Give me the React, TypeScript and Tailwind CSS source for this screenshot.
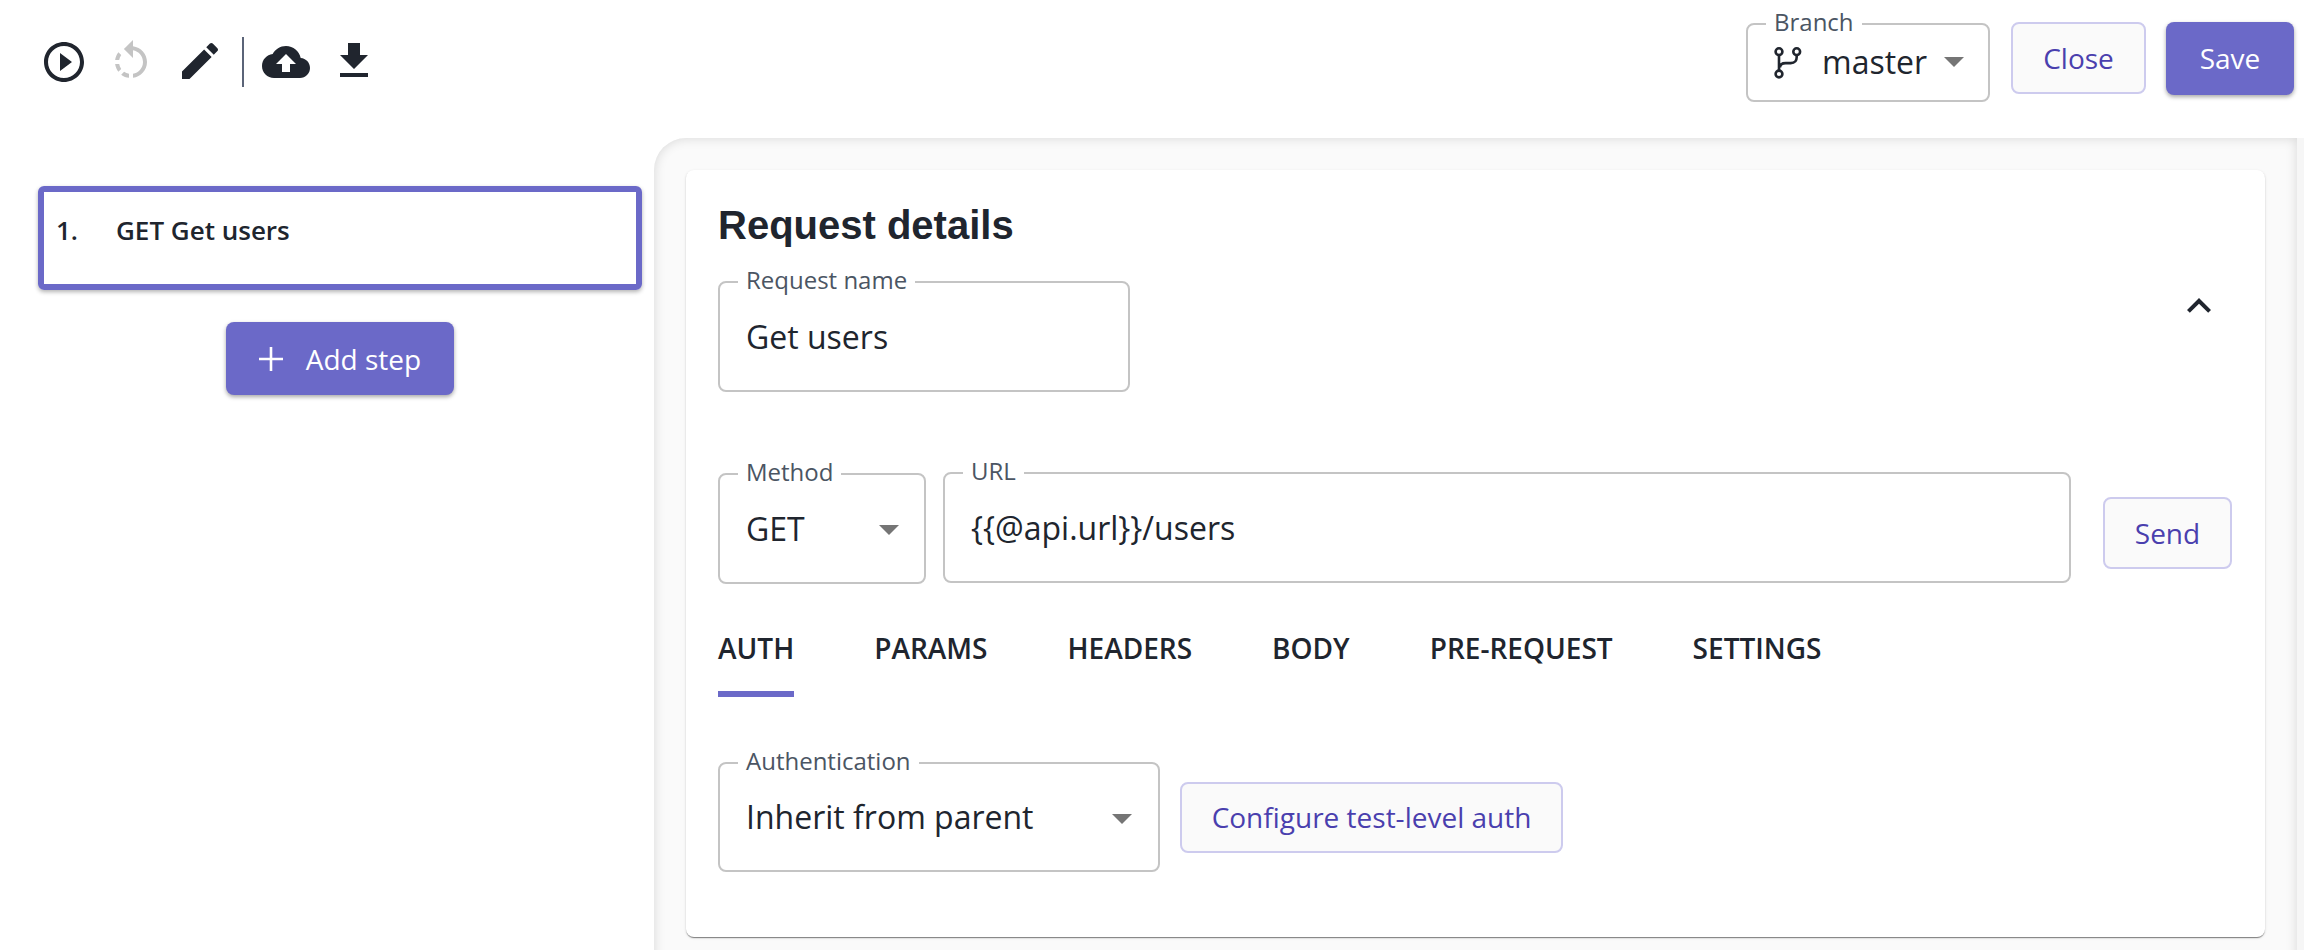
import type { ReactNode } from "react";

const font = "font-['Open_Sans',sans-serif]";

const Icon = ({ d, className }: { d: string; className: string }) => (
  <svg viewBox="0 0 24 24" fill="currentColor" className={className}>
    <path d={d} />
  </svg>
);

const arrow = "M7 10l5 5 5-5z";

const Outlined = ({
  label,
  className,
  children,
}: {
  label: string;
  className: string;
  children: ReactNode;
}) => (
  <div className={`relative flex items-center rounded-[8px] border-2 border-[#c4c4c4] pl-[26px] text-[32px] text-[#20252e] ${className}`}>
    <span className="absolute left-[18px] top-[-18px] bg-white px-[8px] text-[24px] leading-[30px] text-[#4b5563]">
      {label}
    </span>
    {children}
  </div>
);

const SelectArrow = ({ className }: { className: string }) => (
  <Icon d={arrow} className={`absolute size-[48px] text-[#757575] ${className}`} />
);

const LightButton = ({ children, className }: { children: ReactNode; className: string }) => (
  <button className={`rounded-[8px] border-2 border-[#cdcbee] bg-[#fafafa] text-[28px] text-[#4a3fae] ${className}`}>
    {children}
  </button>
);

const tabs = ["AUTH", "PARAMS", "HEADERS", "BODY", "PRE-REQUEST", "SETTINGS"];

export default function App() {
  return (
    <div className={`flex h-[950px] w-[2304px] flex-col overflow-hidden bg-white ${font}`}>
      <header className="flex h-[138px] shrink-0">
        <div className="flex flex-1 items-start pl-[40px] pt-[38px] text-[#20252e]">
          <Icon
            className="size-[48px]"
            d="M10 16.5l6-4.5-6-4.5v9zM12 2C6.48 2 2 6.48 2 12s4.48 10 10 10 10-4.48 10-10S17.52 2 12 2zm0 18c-4.41 0-8-3.59-8-8s3.59-8 8-8 8 3.59 8 8-3.59 8-8 8z"
          />
          <Icon
            className="ml-[19px] size-[48px] text-[#c4c4c4]"
            d="M7.11 8.53L5.7 7.11C4.8 8.27 4.24 9.61 4.07 11h2.02c.14-.87.49-1.72 1.02-2.47zM6.09 13H4.07c.17 1.39.72 2.73 1.62 3.89l1.41-1.42c-.52-.75-.87-1.59-1.01-2.47zm1.01 5.32c1.16.9 2.51 1.44 3.9 1.61V17.9c-.87-.15-1.71-.49-2.46-1.03L7.1 18.32zM13 4.07V1L8.45 5.55 13 10V6.09c2.84.48 5 2.94 5 5.91s-2.16 5.43-5 5.91v2.02c3.95-.49 7-3.85 7-7.93s-3.05-7.44-7-7.93z"
          />
          <Icon
            className="ml-[21px] mt-[-1px] size-[48px]"
            d="M3 17.25V21h3.75L17.81 9.94l-3.75-3.75L3 17.25zM20.71 7.04c.39-.39.39-1.02 0-1.41l-2.34-2.34c-.39-.39-1.02-.39-1.41 0l-1.83 1.83 3.75 3.75 1.83-1.83z"
          />
          <div className="ml-[18px] mt-[-1px] h-[50px] w-[2px] bg-[#5b6478]" />
          <Icon
            className="ml-[18px] size-[48px]"
            d="M19.35 10.04C18.67 6.59 15.64 4 12 4 9.11 4 6.6 5.64 5.35 8.04 2.34 8.36 0 10.91 0 14c0 3.31 2.69 6 6 6h13c2.76 0 5-2.24 5-5 0-2.64-2.05-4.78-4.65-4.96zM14 13v4h-4v-4H7l5-5 5 5h-3z"
          />
          <Icon
            className="ml-[20px] mt-[-1px] size-[48px]"
            d="M19 9h-4V3H9v6H5l7 7 7-7zM5 18v2h14v-2H5z"
          />
        </div>
        <div className="flex items-start pr-[10px] pt-[22px]">
          <Outlined label="Branch" className="mt-px h-[79px] w-[244px] !pl-[24px]">
            <svg viewBox="0 0 30 34" fill="none" stroke="currentColor" strokeWidth="2.6" className="h-[34px] w-[30px]">
              <circle cx="7" cy="5.7" r="3.4" />
              <circle cx="24.7" cy="5.7" r="3.4" />
              <circle cx="7" cy="28" r="3.4" />
              <path d="M7 9.1v15.5M24.7 9.1v2c0 4-2 6-6 6h-5c-3.5 0-5.7 1.5-5.7 4.5" />
            </svg>
            <span className="mb-[2px] ml-[20px]">master</span>
            <SelectArrow className="right-[10px] top-[12px]" />
          </Outlined>
          <LightButton className="ml-[21px] h-[72px] w-[135px]">Close</LightButton>
          <button className="ml-[20px] h-[73px] w-[128px] rounded-[8px] bg-[#6b69c8] pb-[2px] text-[28px] text-white shadow-[0_2px_4px_rgba(0,0,0,0.35)]">
            Save
          </button>
        </div>
      </header>
      <div className="flex min-h-0 flex-1">
        <aside className="flex w-[654px] shrink-0 flex-col items-center pl-[38px] pr-[12px] pt-[48px]">
          <div className="h-[104px] w-full rounded-[6px] border-[6px] border-[#6b69c8] pl-[12px] pt-[21px] text-[26px] font-semibold leading-[34px] text-[#20252e] shadow-[0_2px_4px_rgba(0,0,0,0.3)]">
            <span className="inline-block w-[60px]">1.</span>GET Get users
          </div>
          <button className="mt-[32px] flex h-[73px] w-[228px] items-center justify-center rounded-[8px] bg-[#6b69c8] text-[28px] text-white shadow-[0_2px_4px_rgba(0,0,0,0.35)]">
            <svg viewBox="0 0 24 24" stroke="currentColor" strokeWidth="2.6" className="mr-[23px] size-[24px]">
              <path d="M12 0v24M0 12h24" />
            </svg>
            Add step
          </button>
        </aside>
        <main className="mb-[-40px] flex-1 rounded-tl-[32px] bg-[#fafafa] pl-[32px] pr-[32px] pt-[32px] shadow-[inset_0_0_12px_rgba(0,0,0,0.14)]">
          <section className="relative h-[767px] rounded-[8px] bg-white px-[32px] pt-[32px] shadow-[0_2px_1px_-1px_rgba(0,0,0,0.3),0_1px_1px_0_rgba(0,0,0,0.2),0_1px_3px_0_rgba(0,0,0,0.12)]">
            <h2 className="font-['Liberation_Sans',sans-serif] text-[40px] font-bold leading-[46px] text-[#20252e]">
              Request details
            </h2>
            <Outlined label="Request name" className="mt-[33px] h-[111px] w-[412px]">
              Get users
            </Outlined>
            <svg viewBox="0 0 24 24" fill="currentColor" className="absolute right-[42px] top-[112px] size-[48px] text-[#20252e]">
              <path d="M7.41 15.41L12 10.83l4.59 4.58L18 14l-6-6-6 6z" />
            </svg>
            <div className="mt-[80px] flex items-start">
              <Outlined label="Method" className="mt-px h-[111px] w-[208px]">
                GET
                <SelectArrow className="right-[11px] top-[30px]" />
              </Outlined>
              <Outlined label="URL" className="ml-[17px] h-[111px] w-[1128px]">
                {"{{@api.url}}/users"}
              </Outlined>
              <LightButton className="ml-[32px] mt-[25px] h-[72px] w-[129px]">Send</LightButton>
            </div>
            <nav className="mt-[36px] flex gap-[80px]">
              {tabs.map((tab, i) => (
                <div
                  key={tab}
                  className={`h-[77px] pt-[9px] text-[28px] font-semibold leading-[38px] text-[#20252e] ${i === 0 ? "border-b-[6px] border-[#6b69c8]" : ""}`}
                >
                  {tab}
                </div>
              ))}
            </nav>
            <div className="mt-[65px] flex items-center">
              <Outlined label="Authentication" className="h-[110px] w-[442px]">
                Inherit from parent
                <SelectArrow className="right-[12px] top-[30px]" />
              </Outlined>
              <LightButton className="ml-[20px] h-[71px] w-[383px]">Configure test-level auth</LightButton>
            </div>
          </section>
        </main>
        <div className="mb-[-40px] w-[7px] shrink-0 bg-[#f6f6f6]" />
      </div>
    </div>
  );
}
